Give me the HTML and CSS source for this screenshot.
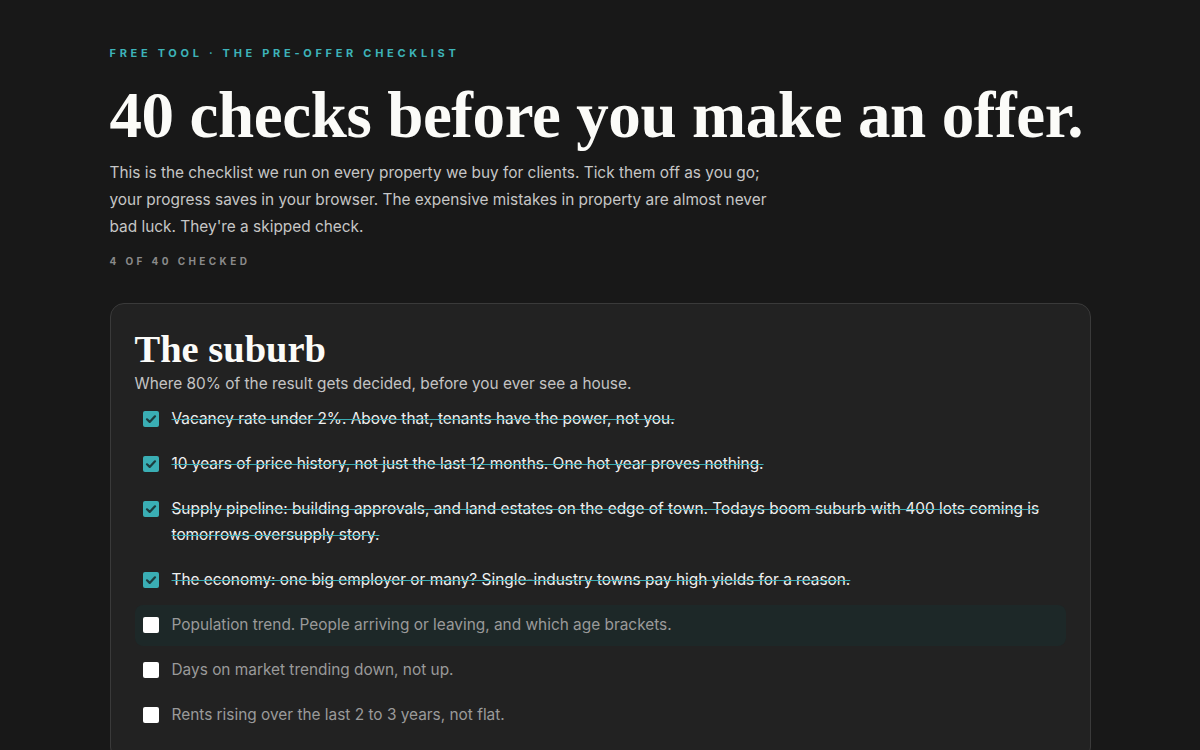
FILE: index.html
```html
<!DOCTYPE html>
<html lang="en">
<head>
<meta charset="utf-8">
<title>The pre-offer checklist</title>
<link rel="stylesheet" href="styles.css">
</head>
<body>
<main class="page">
  <p class="eyebrow">Free tool · The pre-offer checklist</p>
  <h1 class="title">40 checks before you make an offer.</h1>
  <p class="intro">This is the checklist we run on every property we buy for clients. Tick them off as you go; your progress saves in your browser. The expensive mistakes in property are almost never bad luck. They're a skipped check.</p>
  <p class="progress">4 of 40 checked</p>

  <section class="card">
    <h2 class="card-title">The suburb</h2>
    <p class="card-sub">Where 80% of the result gets decided, before you ever see a house.</p>
    <ul class="list">
      <li class="item done"><span class="box"><svg viewBox="0 0 16 16" width="16" height="16"><path d="M4 8.3l2.7 2.6L12 5.3" fill="none" stroke="#1d3b3d" stroke-width="2.2" stroke-linecap="round" stroke-linejoin="round"/></svg></span><span class="text">Vacancy rate under 2%. Above that, tenants have the power, not you.</span></li>
      <li class="item done"><span class="box"><svg viewBox="0 0 16 16" width="16" height="16"><path d="M4 8.3l2.7 2.6L12 5.3" fill="none" stroke="#1d3b3d" stroke-width="2.2" stroke-linecap="round" stroke-linejoin="round"/></svg></span><span class="text">10 years of price history, not just the last 12 months. One hot year proves nothing.</span></li>
      <li class="item done"><span class="box"><svg viewBox="0 0 16 16" width="16" height="16"><path d="M4 8.3l2.7 2.6L12 5.3" fill="none" stroke="#1d3b3d" stroke-width="2.2" stroke-linecap="round" stroke-linejoin="round"/></svg></span><span class="text">Supply pipeline: building approvals, and land estates on the edge of town. Todays boom suburb with 400 lots coming is tomorrows oversupply story.</span></li>
      <li class="item done"><span class="box"><svg viewBox="0 0 16 16" width="16" height="16"><path d="M4 8.3l2.7 2.6L12 5.3" fill="none" stroke="#1d3b3d" stroke-width="2.2" stroke-linecap="round" stroke-linejoin="round"/></svg></span><span class="text">The economy: one big employer or many? Single-industry towns pay high yields for a reason.</span></li>
      <li class="item hover"><span class="box"></span><span class="text">Population trend. People arriving or leaving, and which age brackets.</span></li>
      <li class="item"><span class="box"></span><span class="text">Days on market trending down, not up.</span></li>
      <li class="item"><span class="box"></span><span class="text">Rents rising over the last 2 to 3 years, not flat.</span></li>
    </ul>
  </section>
</main>
</body>
</html>
```

FILE: styles.css
```css
* { box-sizing: border-box; }
html, body { margin: 0; padding: 0; }
body {
  background: #181818;
  color: #e8e8e8;
  font-family: Inter, "Noto Sans", sans-serif;
  overflow: hidden;
  height: 750px;
}
.page {
  width: 981px;
  margin: 0 auto;
  padding-top: 46px;
}
.eyebrow {
  margin: 0;
  color: #3db3b9;
  font-size: 11px;
  font-weight: 700;
  letter-spacing: 3.7px;
  text-transform: uppercase;
  line-height: 14px;
}
.title {
  margin: 15px 0 0;
  font-family: "Liberation Serif", serif;
  font-weight: 700;
  font-size: 65px;
  line-height: 80px;
  color: #fbfbf8;
  letter-spacing: -0.4px;
  white-space: nowrap;
}
.intro {
  margin: 4px 0 0;
  width: 670px;
  font-size: 15.4px;
  line-height: 27px;
  color: #c6c6c6;
}
.progress {
  margin: 14px 0 0;
  font-size: 10px;
  font-weight: 700;
  letter-spacing: 3.4px;
  text-transform: uppercase;
  color: #8a8a8a;
  line-height: 14px;
}
.card {
  margin-top: 35px;
  background: #222222;
  border: 1px solid #3a3a3a;
  border-radius: 14px;
  padding: 21px 24px 24px;
}
.card-title {
  margin: 0;
  font-family: "Liberation Serif", serif;
  font-weight: 700;
  font-size: 38.5px;
  line-height: 48px;
  color: #fbfbf8;
}
.card-sub {
  margin: 0 0 4px;
  font-size: 15.4px;
  line-height: 22px;
  color: #c4c4c4;
}
.list {
  list-style: none;
  margin: 0;
  padding: 0;
  display: flex;
  flex-direction: column;
  gap: 4px;
}
.item {
  display: flex;
  align-items: flex-start;
  gap: 13px;
  padding: 7px 8px 8px;
  border-radius: 8px;
  font-size: 15.4px;
  line-height: 26px;
  color: #9a9a9a;
}
.item.hover { background: #1d2828; }
.box {
  flex: none;
  width: 16px;
  height: 16px;
  margin-top: 5px;
  background: #ffffff;
  border-radius: 2px;
  display: flex;
}
.item.done .box { background: #3aaeb4; }
.item.done .text {
  color: #f0f0f0;
  text-decoration: line-through;
  text-decoration-color: #3aaeb4;
  text-decoration-thickness: 1px;
}
```
